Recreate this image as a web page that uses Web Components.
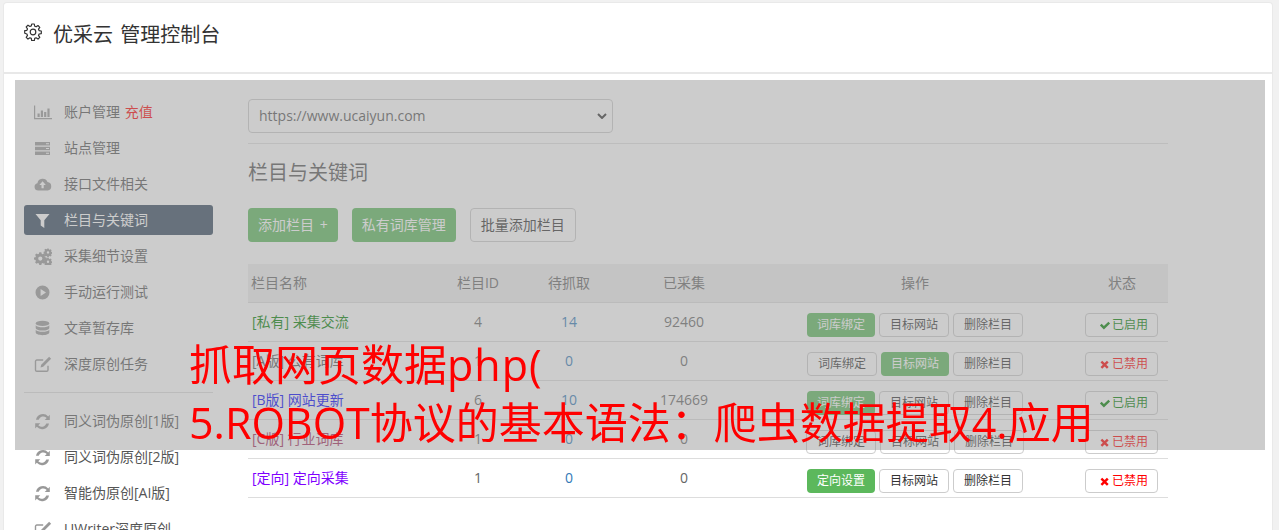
<!doctype html>
<html lang="zh">
<head>
<meta charset="utf-8">
<title>优采云 管理控制台</title>
<style>
  html, body { margin: 0; height: 100%; overflow: hidden; background: #f1f1f1; }
  body { font: 14px/20px "Open Sans", "Noto Sans CJK SC", sans-serif; color: #333; }
</style>
</head>
<body>
<admin-shell>
  <side-nav slot="nav"></side-nav>
  <column-page></column-page>
</admin-shell>
<page-overlay>抓取网页数据<span style="letter-spacing:1px">php(</span><br>5.ROBOT协议的基本语法：爬虫数据提取4.应用</page-overlay>

<script>
const html = String.raw;

const ICONS = {
  chart: `<path d="M0 1.500h1.200V14H18v1.200H0z"/><path d="M3.500 9.500h2.200V13H3.500zM6.800 6.500H9V13H6.800zM10.100 8h2.200v5h-2.200zM13.400 4.500h2.200V13h-2.200z"/>`,
  server: `<path d="M1 2h15v3.400H1zM1 6.800h15v3.400H1zM1 11.600h15V15H1z"/><path fill="#fff" d="M12 3.200h3v1h-3zM12 8h3v1h-3zM12 12.800h3v1h-3z"/>`,
  cloud: `<path fill-rule="evenodd" d="M4.200 14.500A3.700 3.700 0 0 1 3.400 7.200 5.300 5.300 0 0 1 13.500 6a4.300 4.300 0 0 1 .2 8.500zM8.600 5.200 5.400 9h2.100v3.200h2.200V9h2.100z"/>`,
  filter: `<path d="M1.500 2h14l-5.200 6.200V16l-3.600-2.600V8.200z"/>`,
  gears: `<path fill-rule="evenodd" d="M5.300 4.300h2l.4 1.500 1 .4 1.300-.8 1.500 1.400-.8 1.400.4 1 1.500.4v2l-1.500.4-.4 1 .8 1.400-1.500 1.400-1.300-.8-1 .4-.4 1.500h-2l-.4-1.500-1-.4-1.300.8-1.500-1.400.8-1.400-.4-1L0 11.600v-2l1.500-.4.4-1-.8-1.400 1.500-1.400 1.300.8 1-.4zm1 4.200a2.100 2.100 0 1 0 0 4.200 2.100 2.100 0 0 0 0-4.200z"/><path fill-rule="evenodd" d="M13.300.5h1.400l.3 1 .7.300 1-.5.900 1-.5.900.3.700 1 .3v1.400l-1 .3-.3.700.5.900-.9 1-1-.5-.7.300-.3 1h-1.400l-.3-1-.7-.3-1 .5-.9-1 .5-.9-.3-.7-1-.3V3.700l1-.3.3-.7-.5-.9.9-1 1 .5.7-.3zM14 3.200a1.200 1.200 0 1 0 0 2.400 1.200 1.200 0 0 0 0-2.400zM13.300 9.800h1.400l.3 1 .7.300 1-.5.900 1-.5.900.3.700 1 .3v1.400l-1 .3-.3.700.5.900-.9 1-1-.5-.7.300-.3.400h-1.400l-.3-.400-.7-.3-1 .5-.9-1 .5-.9-.3-.7-1-.3V13l1-.3.3-.7-.5-.9.9-1 1 .5.700-.3zM14 12.500a1.200 1.200 0 1 0 0 2.400 1.200 1.200 0 0 0 0-2.400z"/>`,
  play: `<path fill-rule="evenodd" d="M8.500 1.500a7 7 0 1 1 0 14 7 7 0 0 1 0-14zM6.600 5v7l5.400-3.500z"/>`,
  database: `<ellipse cx="8.500" cy="3.400" rx="6.800" ry="2.600"/><path d="M1.700 5.200c1 1.400 3.800 2 6.800 2s5.800-.6 6.800-2v2.800c0 1.400-3 2.600-6.800 2.600S1.700 9.400 1.700 8z"/><path d="M1.700 9.800c1 1.400 3.800 2 6.800 2s5.800-.6 6.800-2v2.800c0 1.400-3 2.600-6.800 2.600s-6.800-1.200-6.800-2.600z"/>`,
  edit: `<path fill="none" stroke="currentColor" stroke-width="1.400" d="M14 9.800V14a1.300 1.300 0 0 1-1.300 1.300H2.800A1.300 1.300 0 0 1 1.500 14V5.300A1.300 1.300 0 0 1 2.800 4h6.400"/><path d="M15.100 .8l2 2L9.200 10.700l-2.700.7.700-2.700z"/>`,
  refresh: `<path d="M15.800 1.800v5.100h-5.100l2-2a4.800 4.800 0 0 0-8 1.800H2a7 7 0 0 1 12.200-3.300zM1.200 15.400v-5.100h5.100l-2 2a4.800 4.800 0 0 0 8-1.800H15a7 7 0 0 1-12.200 3.300z"/>`,
};

function icon(name) {
  return `<svg viewBox="0 0 18 17" width="18" height="17" fill="currentColor" aria-hidden="true">${ICONS[name]}</svg>`;
}

class AdminShell extends HTMLElement {
  constructor() {
    super();
    this.attachShadow({ mode: "open" });
  }

  connectedCallback() {
    this.shadowRoot.innerHTML = html`
      <style>
        :host { display: block; margin: 3px 7px 0 4px; background: #fff; box-shadow: 0 0 0 1px #e9e9e9; height: 527px; border-radius: 3px 3px 0 0; overflow: hidden; }
        header { height: 71px; border-bottom: 2px solid #e8e8e8; display: flex; align-items: center; gap: 11px; padding: 0 20px 6px; box-sizing: border-box; font-size: 20px; color: #333; }
        header svg { flex: none; margin-top: -5px; }
        header span { word-spacing: 2px; }
        .body { display: grid; grid-template-columns: 189px 920px; column-gap: 35px; padding: 23px 0 0 20px; }
      </style>
      <header>
        <svg viewBox="0 0 18 18" width="18" height="18" fill="none" stroke="#333" stroke-width="1.200"><circle cx="9" cy="9" r="2.800"/><path d="M7.700 1h2.600l.4 2.200 1.400.6 1.900-1.300 1.800 1.800-1.300 1.900.6 1.400 2.200.4v2.600l-2.200.4-.6 1.400 1.300 1.900-1.800 1.800-1.900-1.300-1.400.6-.4 2.200H7.700l-.4-2.200-1.400-.6-1.900 1.300-1.800-1.800 1.300-1.900-.6-1.400L.7 10.300V7.700l2.200-.4.6-1.400-1.300-1.900 1.800-1.800 1.900 1.300 1.400-.6z" stroke-linejoin="round"/></svg>
        <span>优采云 管理控制台</span>
      </header>
      <div class="body"><slot name="nav"></slot><slot></slot></div>
    `;
  }
}

class SideNav extends HTMLElement {
  constructor() {
    super();
    this.attachShadow({ mode: "open" });
  }

  connectedCallback() {
    const top = [
      ["chart", `账户管理 <b>充值</b>`],
      ["server", "站点管理"],
      ["cloud", "接口文件相关"],
      ["filter", "栏目与关键词", true],
      ["gears", "采集细节设置"],
      ["play", "手动运行测试"],
      ["database", "文章暂存库"],
      ["edit", "深度原创任务"],
    ];
    const bottom = [
      ["refresh", "同义词伪原创[1版]"],
      ["refresh", "同义词伪原创[2版]"],
      ["refresh", "智能伪原创[AI版]"],
      ["edit", "UWriter深度原创"],
    ];
    const row = ([name, label, active]) =>
      `<a class="${active ? "active" : ""}">${icon(name)}<span>${label}</span></a>`;
    this.shadowRoot.innerHTML = html`
      <style>
        :host { display: block; }
        a { display: flex; align-items: center; height: 30px; margin-bottom: 6px; padding-left: 10px; gap: 12px; border-radius: 3px; color: #555; font-size: 14px; white-space: nowrap; }
        a svg { color: #999; flex: none; }
        a.active { background: #34495e; color: #fff; }
        a.active svg { color: #fff; }
        b { font-weight: normal; color: #ff0000; margin-left: 1px; }
        hr { border: 0; border-top: 1px solid #ddd; margin: 13px 0; }
      </style>
      ${top.map(row).join("")}
      <hr>
      ${bottom.map(row).join("")}
    `;
  }
}

class ActionButton extends HTMLElement {
  constructor() {
    super();
    this.attachShadow({ mode: "open" });
  }

  connectedCallback() {
    this.shadowRoot.innerHTML = html`
      <style>
        :host { display: inline-flex; align-items: center; justify-content: center; box-sizing: border-box; height: 24px; padding: 0 10px; font-size: 12px; border: 1px solid #ccc; border-radius: 4px; background: #fff; color: #333; white-space: nowrap; word-spacing: 2px; }
        :host([primary]) { background: #5cb85c; border: 0; color: #fff; }
        :host([large]) { height: 34px; font-size: 14px; }
      </style>
      <slot></slot>
    `;
  }
}

class StatusButton extends HTMLElement {
  constructor() {
    super();
    this.attachShadow({ mode: "open" });
  }

  connectedCallback() {
    const on = this.hasAttribute("on");
    const mark = on
      ? `<path d="M1 6.500 3 4.500l2.700 2.700L11 2l2 2-7.300 7.300z"/>`
      : `<path d="M1.700 4 3.700 2 6.500 4.800 9.300 2l2 2-2.800 2.800 2.800 2.800-2 2-2.800-2.800-2.800 2.800-2-2 2.800-2.800z"/>`;
    this.shadowRoot.innerHTML = html`
      <style>
        :host { display: inline-flex; align-items: center; justify-content: center; box-sizing: border-box; width: 73px; height: 24px; font-size: 12px; border: 1px solid #ccc; border-radius: 4px; background: #fff; gap: 1px; padding-left: 4px; color: ${on ? "#008000" : "#ff0000"}; }
        svg { flex: none; }
      </style>
      <svg viewBox="0 0 14 13" width="12" height="11" fill="currentColor">${mark}</svg>
      <slot></slot>
    `;
  }
}

class ColumnPage extends HTMLElement {
  constructor() {
    super();
    this.attachShadow({ mode: "open" });
  }

  connectedCallback() {
    const rows = [
      { tag: "[私有]", name: "采集交流", color: "#008000", id: 4, wait: 14, done: 92460, first: "词库绑定", firstOn: true, on: true },
      { tag: "[A版]", name: "公有词库", color: "#555", id: 1, wait: 0, done: 0, first: "词库绑定", siteOn: true },
      { tag: "[B版]", name: "网站更新", color: "#0000ff", id: 6, wait: 10, done: 174669, first: "词库绑定", firstOn: true, on: true },
      { tag: "[C版]", name: "行业词库", color: "#a52a5a", id: 1, wait: 0, done: 0, first: "词库绑定" },
      { tag: "[定向]", name: "定向采集", color: "#7f00ff", id: 1, wait: 0, done: 0, first: "定向设置", firstOn: true },
    ];
    const tr = (r) => html`
      <tr>
        <td class="name" style="color:${r.color}">${r.tag} ${r.name}</td>
        <td class="c id">${r.id}</td>
        <td class="c wait">${r.wait}</td>
        <td class="c id">${r.done}</td>
        <td><div class="ops">
          <action-button ${r.firstOn ? "primary" : ""}>${r.first}</action-button>
          <action-button ${r.siteOn ? "primary" : ""}>目标网站</action-button>
          <action-button>删除栏目</action-button>
        </div></td>
        <td><div class="state"><status-button ${r.on ? "on" : ""}>${r.on ? "已启用" : "已禁用"}</status-button></div></td>
      </tr>`;
    this.shadowRoot.innerHTML = html`
      <style>
        :host { display: block; font-size: 14px; }
        .picker { display: flex; align-items: center; justify-content: space-between; box-sizing: border-box; width: 365px; height: 34px; border: 1px solid #ccc; border-radius: 4px; padding: 0 5px 0 10px; margin-top: 2px; color: #555; }
        .rule { border-top: 1px solid #e0e0e0; margin-top: 10px; }
        h2 { font-weight: normal; font-size: 20px; line-height: 28px; margin: 15px 0 0; color: #555; }
        .tools { display: flex; gap: 14px; margin-top: 21px; }
        table { width: 100%; border-collapse: collapse; margin-top: 22px; table-layout: fixed; font-size: 14px; }
        th { background: #eee; font-weight: normal; color: #666; height: 38px; padding: 0; border-bottom: 1px solid #ddd; font-size: 14px; }
        th:first-child { text-align: left; padding-left: 3px; }
        th:last-child { padding-right: 2px; }
        td { height: 38px; padding: 0; border-bottom: 1px solid #ddd; }
        .name { padding-left: 4px; }
        .c { text-align: center; }
        .id { color: #666; }
        .wait { color: #337ab7; }
        .ops { display: flex; gap: 4px; justify-content: center; margin-top: 6px; }
        .state { display: flex; justify-content: center; margin: 6px 3px 0 0; }
      </style>
      <div class="picker"><span>https://www.ucaiyun.com</span><svg width="10" height="6" viewBox="0 0 10 6" fill="none" stroke="#333" stroke-width="2"><path d="M1 1l4 4 4-4"/></svg></div>
      <div class="rule"></div>
      <h2>栏目与关键词</h2>
      <div class="tools">
        <action-button primary large>添加栏目 +</action-button>
        <action-button primary large>私有词库管理</action-button>
        <action-button large>批量添加栏目</action-button>
      </div>
      <table>
        <colgroup><col style="width:186px"><col style="width:88px"><col style="width:94px"><col style="width:136px"><col style="width:326px"><col></colgroup>
        <thead><tr><th>栏目名称</th><th>栏目ID</th><th>待抓取</th><th>已采集</th><th>操作</th><th>状态</th></tr></thead>
        <tbody>${rows.map(tr).join("")}</tbody>
      </table>
    `;
  }
}

class PageOverlay extends HTMLElement {
  constructor() {
    super();
    this.attachShadow({ mode: "open" });
  }

  connectedCallback() {
    this.shadowRoot.innerHTML = html`
      <style>
        :host { position: fixed; left: 15px; top: 80px; width: 1250px; height: 370px; background: rgba(153, 153, 153, 0.5); }
        p { position: absolute; left: 174px; top: 256px; margin: 0; color: #f00; font-size: 43px; line-height: 58px; white-space: nowrap; }
      </style>
      <p><slot></slot></p>
    `;
  }
}

customElements.define("admin-shell", AdminShell);
customElements.define("side-nav", SideNav);
customElements.define("action-button", ActionButton);
customElements.define("status-button", StatusButton);
customElements.define("column-page", ColumnPage);
customElements.define("page-overlay", PageOverlay);
</script>
</body>
</html>
